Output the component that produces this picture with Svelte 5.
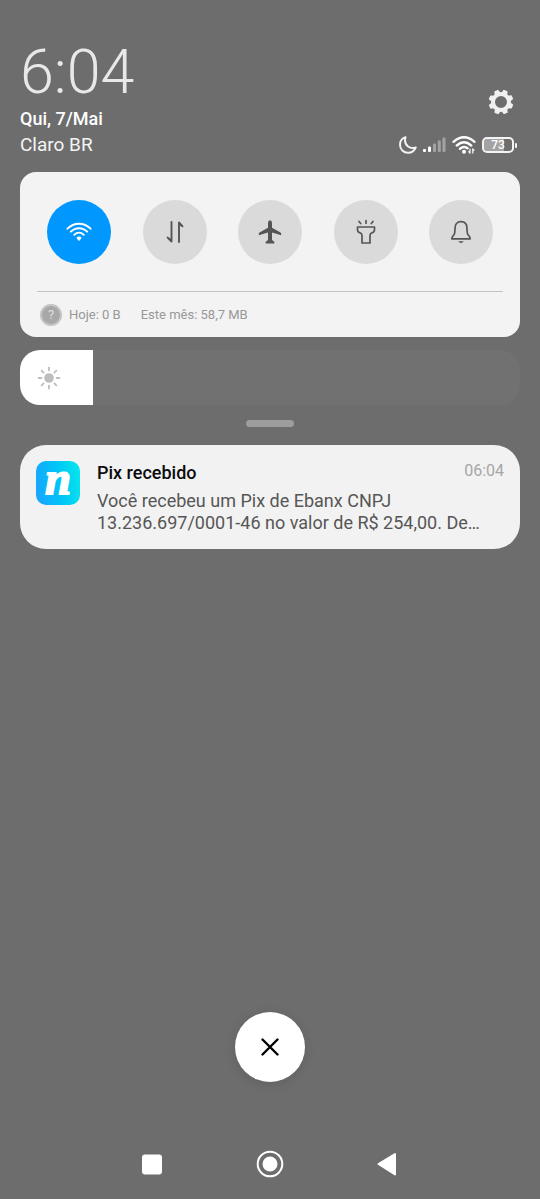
<script lang="ts">
	interface Toggle {
		id: string;
		label: string;
		on: boolean;
	}

	let toggles = $state<Toggle[]>([
		{ id: 'wifi', label: 'Wi-Fi', on: true },
		{ id: 'data', label: 'Dados móveis', on: false },
		{ id: 'plane', label: 'Modo avião', on: false },
		{ id: 'torch', label: 'Lanterna', on: false },
		{ id: 'bell', label: 'Silencioso', on: false }
	]);

	const maxBrightness = 255;
	let brightness = $state(37);
	let dismissed = $state(false);

	const teeth = [22, 67, 112, 157, 202, 247, 292, 337];
	const rays = [0, 45, 90, 135, 180, 225, 270, 315];
</script>

<div class="shade">
	<header class="status">
		<div class="status-left">
			<time class="clock" datetime="06:04">6:04</time>
			<span class="date">Qui, 7/Mai</span>
			<span class="carrier">Claro BR</span>
		</div>
		<div class="status-right">
			<button class="plain settings" aria-label="Configurações">
				<svg width="26" height="26" viewBox="-13 -13 26 26">
					<circle r="8" fill="none" stroke="#f0f0f0" stroke-width="4" />
					{#each teeth as angle}
						<path d="M-3 -9L-2.2 -12Q-2 -12.4 -1.5 -12.4H1.5Q2 -12.4 2.2 -12L3 -9Z" fill="#f0f0f0" transform="rotate({angle})" />
					{/each}
				</svg>
			</button>
			<div class="indicators">
				<svg width="18" height="18" viewBox="0 0 18 18" fill="none" stroke="#f4f4f4" stroke-width="1.9" stroke-linejoin="round">
					<path d="M6.5 1.2C2.8 2.4 1 5.6 1 8.8C1 13.4 4.6 16.8 9 16.8C12.6 16.8 15.6 14.6 16.8 11.4C11.4 13.6 4.2 9.4 6.5 1.2Z" />
				</svg>
				<svg width="23" height="16" viewBox="0 0 23 16">
					<rect x="0" y="12" width="3" height="3" rx="1" fill="#fff" />
					<rect x="5" y="9.5" width="3" height="5.5" rx="1" fill="#fff" />
					<rect x="10" y="6.5" width="3" height="8.5" rx="1" fill="#a3a3a3" />
					<rect x="14.8" y="3.5" width="3" height="11.5" rx="1" fill="#a3a3a3" />
					<rect x="19.5" y="0.5" width="3" height="14.5" rx="1" fill="#a3a3a3" />
				</svg>
				<svg width="24" height="18" viewBox="0 0 24 18" fill="none" stroke="#fff" stroke-width="2.4" stroke-linecap="round">
					<path d="M1.5 5.8Q12 -3.2 22.5 5.8M4.8 9.5Q12 3.2 19.2 9.5M8 12.8Q12 9.6 15.5 12.3" />
					<circle cx="12" cy="15.7" r="2" fill="#fff" stroke="none" />
					<path d="M18 13V17M18 17L16.8 15.6M20.8 17V13M20.8 13L22 14.2" stroke-width="1.2" />
				</svg>
				<span class="battery"><span class="battery-body">73</span></span>
			</div>
		</div>
	</header>

	<section class="panel">
		<div class="toggles">
			{#each toggles as toggle (toggle.id)}
				<button
					class="toggle"
					class:on={toggle.on}
					aria-label={toggle.label}
					aria-pressed={toggle.on}
					onclick={() => (toggle.on = !toggle.on)}
				>
					<svg width="28" height="28" viewBox="0 0 28 28" fill="none" stroke="currentColor" stroke-width="1.7" stroke-linecap="round" stroke-linejoin="round">
						{#if toggle.id === 'wifi'}
							<path d="M2.4 10.7C9 4 19 4 25.6 10.7M5.8 13.7C10.5 9 17.5 9 22.2 13.7M9.2 16.8C12 14 16 14 18.8 16.8" stroke-width="1.9" />
							<path d="M11.5 19.5Q14 17.3 16.5 19.5Q16.5 21 14 22.9Q11.5 21 11.5 19.5Z" fill="currentColor" stroke="none" />
						{:else if toggle.id === 'data'}
							<path d="M10.5 4V23.5L6.6 19.6M18 24V4.5L21.5 8.3" stroke-width="1.9" />
							<path d="M10.5 24L6 18.8L9.8 20.6ZM18 4L22.3 9.2L18.8 7.4Z" fill="currentColor" stroke="none" />
						{:else if toggle.id === 'plane'}
							<path d="M14 2.3Q16 2.3 16 5V9.8L24.5 14.6Q25.5 15.4 25.2 17.2L16 14.5V22L18.3 23.7V25.5H9.7V23.7L12 22V14.5L2.8 17.2Q2.5 15.4 3.5 14.6L12 9.8V5Q12 2.3 14 2.3Z" fill="currentColor" stroke="none" />
						{:else if toggle.id === 'torch'}
							<path d="M5.5 9H22.5V11.5Q22.5 14.2 20 14.8Q18 15.5 18 17.5V25H10V17.5Q10 15.5 8 14.8Q5.500 14.2 5.5 11.5Z" />
							<path d="M14 2.5V5.2M7 3.5L8.7 5.5M21 3.5L19.3 5.5" />
						{:else}
							<path d="M4.8 20.8H23.2Q23 18.5 21.5 17.4Q20 16.3 20 10.5C20 6.5 18 3.7 14 3.7S8 6.5 8 10.5Q8 16.3 6.5 17.4Q5 18.5 4.8 20.8Z" />
							<path d="M11.3 23.3H16.7Q15.7 25 14 25T11.3 23.3Z" fill="currentColor" stroke="none" />
						{/if}
					</svg>
				</button>
			{/each}
		</div>
		<div class="usage">
			<button class="help" aria-label="Ajuda">?</button>
			<span>Hoje: 0 B</span>
			<span class="month">Este mês: 58,7 MB</span>
		</div>
	</section>

	<label class="brightness">
		<span class="fill" style="width: {(brightness / maxBrightness) * 100}%"></span>
		<svg class="sun" width="24" height="24" viewBox="-12 -12 24 24">
			<circle r="4.8" fill="#bdbdbd" />
			{#each rays as angle}
				<path d="M0 -7.6V-10.4" stroke="#bdbdbd" stroke-width="1.8" stroke-linecap="round" transform="rotate({angle})" />
			{/each}
		</svg>
		<input type="range" min="0" max={maxBrightness} bind:value={brightness} aria-label="Brilho" />
	</label>

	<div class="handle"></div>

	{#if !dismissed}
		<article class="notification">
			<div class="app-icon" aria-hidden="true">n</div>
			<div class="body">
				<div class="heading">
					<h2>Pix recebido</h2>
					<time datetime="06:04">06:04</time>
				</div>
				<p>Você recebeu um Pix de Ebanx CNPJ 13.236.697/0001-46 no valor de R$ 254,00. De…</p>
			</div>
		</article>
	{/if}

	<button class="clear" aria-label="Limpar notificações" onclick={() => (dismissed = true)}>
		<svg width="18" height="18" viewBox="0 0 18 18">
			<path d="M1.5 1.5L16.5 16.5M16.5 1.5L1.5 16.5" stroke="#000" stroke-width="2.4" stroke-linecap="round" />
		</svg>
	</button>

	<nav class="navbar">
		<button class="plain nav" aria-label="Recentes">
			<svg width="28" height="28" viewBox="0 0 28 28"><rect x="4" y="4.5" width="20" height="20" rx="3" fill="#fff" /></svg>
		</button>
		<button class="plain nav" aria-label="Início">
			<svg width="28" height="28" viewBox="0 0 28 28">
				<circle cx="14" cy="14" r="12.3" fill="none" stroke="#fff" stroke-width="2" />
				<circle cx="14" cy="14" r="7.5" fill="#fff" />
			</svg>
		</button>
		<button class="plain nav" aria-label="Voltar">
			<svg width="28" height="28" viewBox="0 0 28 28">
				<path d="M4.5 14L21 4V24.5Z" fill="#fff" stroke="#fff" stroke-width="2" stroke-linejoin="round" />
			</svg>
		</button>
	</nav>
</div>

<style>
	:global(body) {
		margin: 0;
		background: #6d6d6d;
	}

	.shade {
		box-sizing: border-box;
		min-height: 100vh;
		padding: 40px 20px 12px;
		display: flex;
		flex-direction: column;
		background: #6d6d6d;
		font-family: Roboto, 'Noto Sans', sans-serif;
	}

	button {
		font-family: inherit;
		border: 0;
		padding: 0;
		cursor: pointer;
	}

	svg {
		display: block;
	}

	.plain {
		background: none;
	}

	.status {
		display: flex;
		justify-content: space-between;
		align-items: flex-end;
		color: #fff;
	}

	.status-left {
		display: flex;
		flex-direction: column;
	}

	.clock {
		font-size: 61px;
		font-weight: 300;
		line-height: 64px;
		color: #e8e8e8;
	}

	.date {
		padding-top: 2px;
		font-size: 18px;
		font-weight: 500;
		line-height: 26px;
	}

	.carrier {
		font-size: 19px;
		line-height: 26px;
		color: #f4f4f4;
	}

	.status-right {
		display: flex;
		flex-direction: column;
		align-items: flex-end;
		gap: 21px;
		padding: 0 3px 4px 0;
	}

	.settings {
		margin-right: 3px;
	}

	.indicators {
		display: flex;
		align-items: center;
		gap: 6px;
	}

	.battery {
		display: flex;
		align-items: center;
		gap: 1px;
	}

	.battery-body {
		box-sizing: border-box;
		width: 32px;
		height: 16px;
		border: 2px solid #f4f4f4;
		border-radius: 5px;
		background: linear-gradient(to right, #a3a3a3 73%, transparent 73%);
		background-clip: padding-box;
		font-size: 12px;
		font-weight: 500;
		line-height: 12px;
		text-align: center;
	}

	.battery::after {
		content: '';
		width: 2px;
		height: 5px;
		border-radius: 1px;
		background: #f4f4f4;
	}

	.panel {
		margin-top: 14px;
		padding: 28px 17px 0;
		border-radius: 16px;
		background: #f3f3f3;
	}

	.toggles {
		display: flex;
		justify-content: space-between;
		padding: 0 10px 27px;
		border-bottom: 1px solid #c4c4c4;
	}

	.toggle {
		width: 64px;
		height: 64px;
		display: grid;
		place-items: center;
		border-radius: 50%;
		background: #dadada;
		color: #555;
	}

	.toggle.on {
		background: #0098ff;
		color: #fff;
	}

	.usage {
		display: flex;
		align-items: center;
		height: 45px;
		padding-left: 3px;
		font-size: 13px;
		color: #989898;
	}

	.help {
		box-sizing: border-box;
		width: 22px;
		height: 22px;
		margin-right: 7px;
		border: 2px solid #c4c4c4;
		border-radius: 50%;
		background: #a8a8a8;
		color: #dedede;
		font-size: 13px;
		line-height: 18px;
	}

	.month {
		margin-left: 20px;
	}

	.brightness {
		position: relative;
		display: flex;
		align-items: center;
		height: 55px;
		margin-top: 13px;
		border-radius: 20px;
		background: #717171;
		overflow: hidden;
	}

	.fill {
		position: absolute;
		inset: 0 auto 0 0;
		background: #fff;
	}

	.sun {
		position: relative;
		margin-left: 17px;
	}

	.brightness input {
		position: absolute;
		inset: 0;
		width: 100%;
		height: 100%;
		margin: 0;
		opacity: 0;
		cursor: pointer;
	}

	.handle {
		width: 48px;
		height: 7px;
		margin: 15px auto 18px;
		border-radius: 4px;
		background: #9d9d9d;
	}

	.notification {
		display: flex;
		gap: 17px;
		padding: 16px 16px 15px;
		border-radius: 26px;
		background: #f2f2f2;
	}

	.app-icon {
		flex-shrink: 0;
		width: 44px;
		height: 44px;
		border-radius: 10px;
		background: linear-gradient(80deg, #1ba2ff, #00c4f8 50%, #06e8ea);
		color: #fff;
		font-family: 'Liberation Serif', serif;
		font-size: 46px;
		font-style: italic;
		font-weight: 700;
		line-height: 36px;
		text-align: center;
		-webkit-text-stroke: 2px #fff;
	}

	.body {
		flex: 1;
		min-width: 0;
	}

	.heading {
		display: flex;
		justify-content: space-between;
	}

	h2 {
		margin: 0;
		font-size: 18px;
		font-weight: 500;
		line-height: 24px;
		color: #0c0c0c;
	}

	.heading time {
		font-size: 16px;
		line-height: 20px;
		color: #a6a6a6;
	}

	p {
		margin: 5px 0 0;
		font-size: 18px;
		line-height: 22px;
		color: #565656;
	}

	.clear {
		width: 70px;
		height: 70px;
		margin: auto auto 59px;
		display: grid;
		place-items: center;
		border-radius: 50%;
		background: #fff;
		box-shadow: 0 2px 12px rgba(0, 0, 0, 0.12);
	}

	.navbar {
		display: flex;
		justify-content: center;
		gap: 70px;
	}

	.nav {
		width: 48px;
		height: 46px;
		display: grid;
		place-items: center;
	}
</style>
